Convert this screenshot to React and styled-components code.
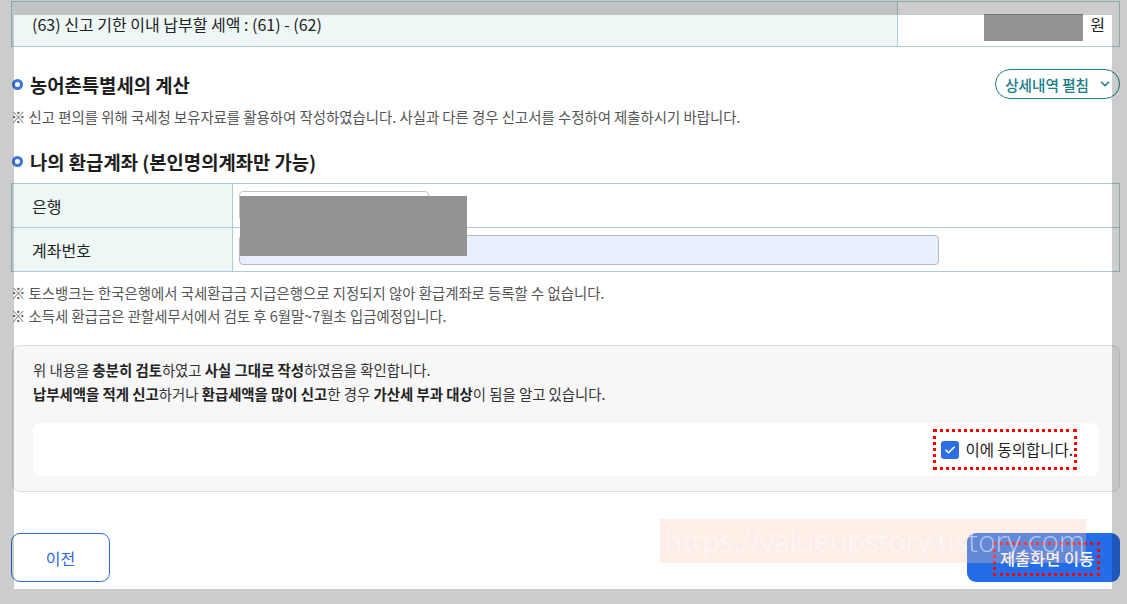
import React from 'react'
import styled, { createGlobalStyle } from 'styled-components'
import { ChevronDown } from 'lucide-react'

const GlobalStyle = createGlobalStyle`
	body {
		margin: 0;
		background: #fff;
		font-family: "Noto Sans CJK KR", "Noto Sans", sans-serif;
		color: #222;
	}
	* {
		box-sizing: border-box;
	}
`

const LINE = '#a9d1d4'

const Page = styled.div`
	width: 1109px;
	margin-left: 11px;
	padding-top: 1px;
`

const SumRow = styled.div`
	display: flex;
	height: 46px;
	border: 1px solid ${LINE};
`

const SumLabel = styled.div`
	flex: 0 0 886px;
	display: flex;
	align-items: center;
	padding-left: 20px;
	background: #eef7f6;
	border-right: 1px solid ${LINE};
	font-size: 16px;
`

const SumValue = styled.div`
	flex: 1;
	display: flex;
	justify-content: flex-end;
	align-items: center;
	gap: 7px;
	padding-right: 14px;
	font-size: 16px;
`

const Redacted = styled.span`
	display: block;
	width: ${p => p.w}px;
	height: ${p => p.h}px;
	background: #939393;
	margin-top: ${p => p.offset || 0}px;
`

const HeadRow = styled.div`
	display: flex;
	justify-content: space-between;
	align-items: center;
	height: 30px;
	margin-top: ${p => p.gap}px;
`

const Heading = styled.h2`
	display: flex;
	align-items: center;
	gap: 7px;
	margin: 0;
	font-size: 18.8px;
	font-weight: 700;
	color: #1e1e1e;
`

const Ring = styled.span`
	width: 11px;
	height: 11px;
	margin-left: 1px;
	border: 3px solid #3d74dc;
	border-radius: 50%;
`

const DetailButton = styled.button`
	display: flex;
	align-items: center;
	gap: 9px;
	height: 30px;
	padding: 0 7px 0 9px;
	border: 1.5px solid #17828f;
	border-radius: 15px;
	background: #fff;
	color: #167c89;
	font-family: inherit;
	font-size: 14.6px;
	font-weight: 500;
`

const Note = styled.p`
	margin: ${p => p.gap || 0}px 0 0;
	font-size: 14.4px;
	line-height: ${p => p.lh || 20}px;
	color: #555;
`

const AccountTable = styled.div`
	position: relative;
	margin-top: 7px;
	border: 1px solid ${LINE};
	border-top: none;
`

const AccountRow = styled.div`
	display: flex;
	height: 44px;
	border-top: 1px solid ${LINE};
`

const AccountLabel = styled.div`
	flex: 0 0 221px;
	display: flex;
	align-items: center;
	padding-left: 20px;
	background: #eef7f6;
	border-right: 1px solid ${LINE};
	font-size: 16px;
`

const AccountValue = styled.div`
	flex: 1;
	display: flex;
	align-items: center;
	padding-left: 6px;
`

const Field = styled.div`
	width: ${p => p.w}px;
	height: 30px;
	border: 1px solid ${p => (p.filled ? '#b5b8c0' : '#c4c4c4')};
	border-radius: 4px;
	background: ${p => (p.filled ? '#e8effc' : '#fff')};
`

const RedactCover = styled.div`
	position: absolute;
	left: 228px;
	top: 13px;
	width: 227px;
	height: 60px;
	background: #939393;
`

const NoteList = styled.div`
	margin-top: 9px;
`

const AgreeBox = styled.div`
	margin: 18px 0 0 1px;
	padding: 12px 20px 15px;
	border: 1px solid #dcdcdc;
	border-radius: 8px;
	background: #f7f7f7;
`

const AgreeText = styled.p`
	margin: 0;
	font-size: 14.4px;
	line-height: 24px;
	color: #333;

	b {
		font-weight: 700;
		color: #222;
	}
`

const AgreeInner = styled.div`
	display: flex;
	justify-content: flex-end;
	align-items: center;
	height: 53px;
	margin-top: 17px;
	padding-right: 22px;
	border-radius: 8px;
	background: #fff;
`

const AgreeLabel = styled.label`
	display: flex;
	align-items: center;
	gap: 6px;
	padding: 5px 1px 5px 5px;
	border: 3px dotted #ff0000;
	font-size: 15.5px;
	line-height: 25px;
	color: #222;
`

const CheckBox = styled.span`
	display: flex;
	align-items: center;
	justify-content: center;
	width: 18px;
	height: 18px;
	border-radius: 3px;
	background: #2a6fe6;
`

const ButtonRow = styled.div`
	position: relative;
	display: flex;
	justify-content: space-between;
	margin-top: 41px;
`

const PrevButton = styled.button`
	width: 99px;
	height: 49px;
	border: 1px solid #2f6fe4;
	border-radius: 9px;
	background: #fff;
	color: #2a6ae0;
	font-family: inherit;
	font-size: 16px;
`

const SubmitButton = styled.button`
	display: flex;
	align-items: center;
	justify-content: center;
	width: 153px;
	height: 49px;
	padding: 0 0 0 6px;
	border: none;
	border-radius: 9px;
	background: #236de8;
	color: #fff;
	font-family: inherit;
	font-size: 16.4px;
	font-weight: 500;
`

const SubmitText = styled.span`
	padding: 2px 3px 3px 4px;
	margin-top: 3px;
	border: 3px dotted #ff0000;
	line-height: 23px;
`

const Watermark = styled.div`
	position: absolute;
	left: 649px;
	top: -14px;
	width: 426px;
	height: 44px;
	padding-left: 5px;
	overflow: hidden;
	background: rgba(250, 200, 180, 0.3);
	color: rgba(255, 255, 255, 0.55);
	font-family: "Open Sans", sans-serif;
	font-size: 29.5px;
	font-weight: 300;
	line-height: 44px;
	white-space: nowrap;
	pointer-events: none;
`

const DimFrame = styled.div`
	position: fixed;
	left: 14px;
	top: 15px;
	width: 1098px;
	height: 574px;
	box-shadow: 0 0 0 3000px rgba(0, 0, 0, 0.2);
	pointer-events: none;
	z-index: 10;
`

const App = () => {
	return (
		<>
			<GlobalStyle />
			<Page>
				<SumRow>
					<SumLabel>(63) 신고 기한 이내 납부할 세액 : (61) - (62)</SumLabel>
					<SumValue>
						<Redacted w={99} h={27} offset={6} />
						<span>원</span>
					</SumValue>
				</SumRow>

				<HeadRow gap={22}>
					<Heading>
						<Ring />
						농어촌특별세의 계산
					</Heading>
					<DetailButton>
						상세내역 펼침
						<ChevronDown size={14} strokeWidth={2.6} />
					</DetailButton>
				</HeadRow>
				<Note gap={8}>
					※ 신고 편의를 위해 국세청 보유자료를 활용하여 작성하였습니다. 사실과 다른 경우 신고서를 수정하여 제출하시기 바랍니다.
				</Note>

				<HeadRow gap={19}>
					<Heading>
						<Ring />
						나의 환급계좌 (본인명의계좌만 가능)
					</Heading>
				</HeadRow>
				<AccountTable>
					<AccountRow>
						<AccountLabel>은행</AccountLabel>
						<AccountValue>
							<Field w={190} />
						</AccountValue>
					</AccountRow>
					<AccountRow>
						<AccountLabel>계좌번호</AccountLabel>
						<AccountValue>
							<Field w={700} filled />
						</AccountValue>
					</AccountRow>
					<RedactCover />
				</AccountTable>
				<NoteList>
					<Note lh={23}>※ 토스뱅크는 한국은행에서 국세환급금 지급은행으로 지정되지 않아 환급계좌로 등록할 수 없습니다.</Note>
					<Note lh={23}>※ 소득세 환급금은 관할세무서에서 검토 후 6월말~7월초 입금예정입니다.</Note>
				</NoteList>

				<AgreeBox>
					<AgreeText>
						위 내용을 <b>충분히 검토</b>하였고 <b>사실 그대로 작성</b>하였음을 확인합니다.
					</AgreeText>
					<AgreeText>
						<b>납부세액을 적게 신고</b>하거나 <b>환급세액을 많이 신고</b>한 경우 <b>가산세 부과 대상</b>이 됨을 알고 있습니다.
					</AgreeText>
					<AgreeInner>
						<AgreeLabel>
							<CheckBox>
								<svg width='12' height='12' viewBox='0 0 24 24' fill='none' stroke='#fff' strokeWidth='3.5' strokeLinecap='round' strokeLinejoin='round'>
									<path d='M4 12.5l5 5L20 6.5' />
								</svg>
							</CheckBox>
							이에 동의합니다.
						</AgreeLabel>
					</AgreeInner>
				</AgreeBox>

				<ButtonRow>
					<PrevButton>이전</PrevButton>
					<SubmitButton>
						<SubmitText>제출화면 이동</SubmitText>
					</SubmitButton>
					<Watermark>https://valueupstory.tistory.com</Watermark>
				</ButtonRow>
			</Page>
			<DimFrame />
		</>
	)
}

export default App
